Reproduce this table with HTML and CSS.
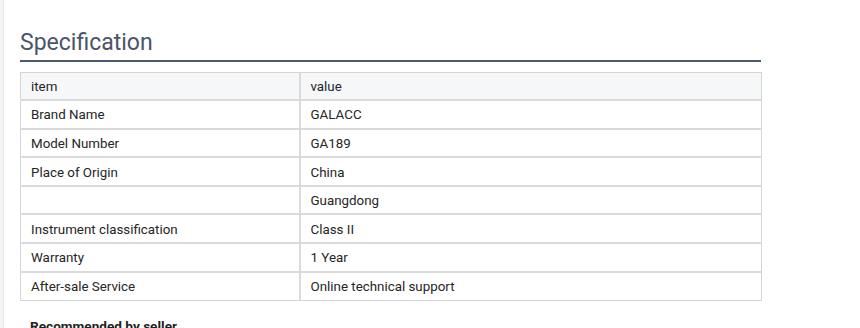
FILE: index.html
```html
<!DOCTYPE html>
<html>
<head>
<meta charset="utf-8">
<link rel="stylesheet" href="styles.css">
</head>
<body>
<div class="page">
  <div class="content">
    <h2 class="title">Specification</h2>
    <table class="spec">
      <tr class="head"><td class="k">item</td><td>value</td></tr>
      <tr><td class="k">Brand Name</td><td>GALACC</td></tr>
      <tr><td class="k">Model Number</td><td>GA189</td></tr>
      <tr><td class="k">Place of Origin</td><td>China</td></tr>
      <tr><td class="k"></td><td>Guangdong</td></tr>
      <tr><td class="k">Instrument classification</td><td>Class II</td></tr>
      <tr><td class="k">Warranty</td><td>1 Year</td></tr>
      <tr><td class="k">After-sale Service</td><td>Online technical support</td></tr>
    </table>
    <div class="rec">Recommended by seller</div>
  </div>
</div>
</body>
</html>
```
FILE: styles.css
```css
html, body {
  margin: 0;
  padding: 0;
  background: #fff;
}
body {
  font-family: Roboto, "Liberation Sans", Arial, sans-serif;
  color: #333;
}
.page {
  display: flex;
  min-height: 328px;
  border-left: 3px solid #f3f4f6;
}
.content {
  border-left: 1px solid #e3e5e8;
  padding: 27px 0 0 16px;
  width: 741px;
}
.title {
  margin: 0;
  font-size: 23px;
  font-weight: 400;
  color: #4a5569;
  line-height: 31px;
  padding-bottom: 2px;
  border-bottom: 2px solid #4b5a70;
}
.spec {
  margin-top: 10px;
  width: 742px;
  border-collapse: collapse;
  border: 1px solid #d6d6d6;
  font-size: 13.35px;
  color: #262626;
}
.spec td {
  border: 1px solid #dadada;
  border-width: 2px 0 0 0;
  height: 28.6px;
  padding: 1px 10px 0;
  box-sizing: border-box;
  line-height: 15px;
  vertical-align: middle;
}
.spec td.k {
  width: 279px;
  border-right: 2px solid #dadada;
}
.spec tr.head td {
  background: #f6f7f9;
  border-top: 0;
  height: 27.6px;
}
.rec {
  margin-top: 17px;
  padding-left: 10px;
  font-size: 13.6px;
  font-weight: 700;
  color: #1f1f1f;
}
```
